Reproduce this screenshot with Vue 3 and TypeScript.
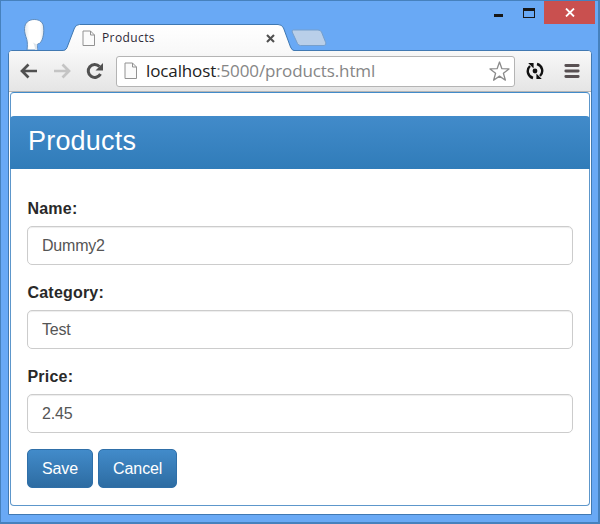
<script setup lang="ts">
import { ref } from 'vue'

interface Field {
  id: string
  label: string
  value: string
}

const title = 'Products'
const fields = ref<Field[]>([
  { id: 'name', label: 'Name:', value: 'Dummy2' },
  { id: 'category', label: 'Category:', value: 'Test' },
  { id: 'price', label: 'Price:', value: '2.45' },
])
</script>

<template>
  <div class="window">
    <header class="titlebar">
      <svg class="avatar" width="28" height="36" viewBox="0 0 28 36">
        <defs>
          <linearGradient id="skin" x1="0" x2="1">
            <stop offset="0" stop-color="#dfe5ea" />
            <stop offset=".25" stop-color="#fff" />
            <stop offset=".8" stop-color="#fff" />
            <stop offset="1" stop-color="#dde3e8" />
          </linearGradient>
        </defs>
        <path d="M7 36C7.600 32 7.500 28.500 6.800 25.500C5.500 21.500 4.300 18.500 4.500 14.500C4.700 9 8.500 5.500 14.200 5.500C20 5.500 23.500 8.500 23.700 14C23.900 18 23.700 20 22.800 23.500C22 27 20.500 29.500 17.500 30.200C17 32 17.200 34 17.800 36Z" fill="url(#skin)" stroke="#5f8cbd" stroke-width="1" />
        <path d="M12.500 28C14 29.500 15.500 30 17.200 30.300C16.800 32 17 34 17.300 36H15C15 32.500 14 30 12.500 28Z" fill="#dde4ea" />
      </svg>
      <div class="tab">
        <svg class="tab-shape" width="232" height="29" viewBox="0 0 232 29">
          <defs>
            <linearGradient id="tabfill" x1="0" x2="0" y1="0" y2="1">
              <stop offset="0" stop-color="#fff" />
              <stop offset="1" stop-color="#f8f8f8" />
            </linearGradient>
          </defs>
          <path d="M0 26.500C2.500 26.500 4 26 5 23.500L12.500 4Q14 .500 17.500 .500H216Q220 .500 221.500 4L228.500 23Q230 26.500 232 26.500V29H0Z" fill="url(#tabfill)" />
          <path d="M0 26.500C2.500 26.500 4 26 5 23.500L12.500 4Q14 .500 17.500 .500H216Q220 .500 221.500 4L228.500 23Q230 26.500 232 26.500" fill="none" stroke="#3f78b2" />
        </svg>
        <svg class="tab-page" width="14" height="17" viewBox="0 0 14 17">
          <path d="M1 1H8.500L12.500 5V15.500H1Z" fill="#fbfbfb" stroke="#929292" />
          <path d="M8.500 1V5H12.500" fill="none" stroke="#929292" />
        </svg>
        <span class="tab-title">{{ title }}</span>
        <svg class="tab-close" width="9" height="9" viewBox="0 0 9 9">
          <path d="M1 1L8 8M8 1L1 8" stroke="#505050" stroke-width="2.100" />
        </svg>
      </div>
      <svg class="newtab" width="36" height="18" viewBox="0 0 36 18">
        <path d="M2.500 1H27Q29.500 1 30.500 3L34.800 13.800Q35.300 16.500 33 16.500H9.500Q7.500 16.500 6.500 14.500L1.200 3Q.600 1 2.500 1Z" fill="#b9cfe9" stroke="#769fcc" />
      </svg>
      <div class="controls">
        <span class="minimize"></span>
        <span class="maximize"></span>
        <span class="close">
          <svg width="10" height="9" viewBox="0 0 10 9">
            <path d="M1 .5L9 8.500M9 .5L1 8.500" stroke="#fff" stroke-width="1.800" />
          </svg>
        </span>
      </div>
    </header>

    <div class="frame">
      <nav class="toolbar">
        <svg class="nav-icon" width="18" height="16" viewBox="0 0 18 16">
          <path d="M17 8H3M8.500 1.500L2 8L8.500 14.500" fill="none" stroke="#505050" stroke-width="2.700" />
        </svg>
        <svg class="nav-icon forward" width="18" height="16" viewBox="0 0 18 16">
          <path d="M1 8H15M9.500 1.500L16 8L9.500 14.500" fill="none" stroke="#c4c4c4" stroke-width="2.700" />
        </svg>
        <svg class="nav-icon reload" width="18" height="18" viewBox="0 0 18 18">
          <path d="M14.500 12A6.500 6.500 0 1 1 13.500 4.500" fill="none" stroke="#505050" stroke-width="3" />
          <path d="M17 1V8.500H9.500Z" fill="#505050" />
        </svg>
        <div class="address">
          <svg width="14" height="18" viewBox="0 0 14 18">
            <path d="M1 1H8.500L12.500 5V16.500H1Z" fill="#fbfbfb" stroke="#929292" />
            <path d="M8.500 1V5H12.500" fill="none" stroke="#929292" />
          </svg>
          <span class="url"><b>localhost</b>:5000/products.html</span>
          <svg class="star" width="21" height="21" viewBox="0 0 21 21">
            <path d="M10.500 1L12.900 7.700L20 7.900L14.400 12.200L16.400 19.200L10.500 15.100L4.600 19.200L6.600 12.200L1 7.900L8.100 7.700Z" fill="#fff" stroke="#8b8b8b" stroke-width="1.300" stroke-linejoin="round" />
          </svg>
        </div>
        <svg class="sync" width="18" height="18" viewBox="0 0 18 18">
          <path d="M7 16A7.100 7.100 0 0 1 4 4M11 2A7.100 7.100 0 0 1 14 14" fill="none" stroke="#111" stroke-width="2.400" />
          <path d="M2.200 1H7.600V6.400ZM15.800 17H10.400V11.600Z" fill="#111" />
          <circle cx="9" cy="9" r="2.400" fill="#111" />
        </svg>
        <svg class="menu" width="16" height="16" viewBox="0 0 16 16">
          <path d="M1.800 2.500H14.200M1.800 8H14.200M1.800 13.500H14.200" stroke="#585052" stroke-width="2.800" stroke-linecap="round" />
        </svg>
      </nav>

      <main class="page">
        <section class="panel">
          <h1 class="heading">{{ title }}</h1>
          <form class="form" @submit.prevent>
            <div v-for="field in fields" :key="field.id" class="group">
              <label :for="field.id">{{ field.label }}</label>
              <input :id="field.id" v-model="field.value" type="text" />
            </div>
            <div class="actions">
              <button type="submit">Save</button>
              <button type="button">Cancel</button>
            </div>
          </form>
        </section>
      </main>
    </div>
  </div>
</template>

<style>
body {
  margin: 0;
}
</style>

<style scoped>
* {
  box-sizing: border-box;
}

svg {
  display: block;
  flex: none;
}

.window {
  display: flex;
  flex-direction: column;
  width: 600px;
  height: 524px;
  padding: 0 6px 7px 7px;
  border: 1px solid #4681bd;
  border-right-width: 2px;
  border-bottom-width: 2px;
  background: #69a9f5;
  font-family: "Liberation Sans", Arial, sans-serif;
}

.titlebar {
  display: flex;
  align-items: flex-end;
  height: 49px;
  flex: none;
}

.avatar {
  margin-left: 12px;
}

.tab {
  position: relative;
  z-index: 1;
  display: flex;
  align-items: center;
  width: 232px;
  height: 28px;
  margin: 0 0 -2px 14px;
  padding: 0 19px 0 20px;
}

.tab-shape {
  position: absolute;
  left: 0;
  top: 0;
}

.tab-page,
.tab-title,
.tab-close {
  position: relative;
}

.tab-title {
  flex: 1;
  margin-left: 6px;
  color: #2d2836;
  font: 12px/16px "Open Sans", "Noto Sans", sans-serif;
  letter-spacing: 0.4px;
}

.newtab {
  margin: 0 0 3px -3px;
}

.controls {
  display: flex;
  align-self: flex-start;
  margin-left: auto;
  margin-right: -3px;
}

.minimize {
  width: 9px;
  height: 3px;
  margin-top: 13px;
  background: #171717;
}

.maximize {
  width: 12px;
  height: 10px;
  margin: 7px 9px 0 20px;
  border: 1px solid #171717;
  border-top-width: 3px;
}

.close {
  display: flex;
  align-items: center;
  justify-content: center;
  width: 51px;
  height: 23px;
  background: #c9504f;
}

.frame {
  display: flex;
  flex: 1;
  flex-direction: column;
  border: 1px solid #4179b2;
  border-radius: 4px 4px 0 0;
  background: #fff;
  overflow: hidden;
}

.toolbar {
  display: flex;
  align-items: center;
  height: 41px;
  flex: none;
  padding: 0 11px;
  border-bottom: 1px solid #b5b5b5;
  background: linear-gradient(#f8f8f8, #e5e5e5);
}

.forward {
  margin-left: 15px;
}

.reload {
  margin-left: 15px;
}

.address {
  display: flex;
  align-items: center;
  width: 399px;
  height: 31px;
  margin-left: 12px;
  padding: 0 4px 0 7px;
  border: 1px solid #b4b4b4;
  border-radius: 3px;
  background: #fff;
}

.url {
  flex: 1;
  margin-left: 8px;
  color: #868686;
  font: 17px/24px "Open Sans", "Noto Sans", sans-serif;
  letter-spacing: -0.12px;
  white-space: nowrap;
}

.url b {
  color: #222;
  font-weight: 400;
}

.sync {
  margin-left: 11px;
}

.menu {
  margin-left: auto;
}

.page {
  flex: 1;
  padding: 0 1px 8px;
}

.panel {
  height: 414px;
  padding-top: 23px;
  border: 1px solid #5d97cb;
  border-top-color: #428bca;
  border-radius: 4px;
}

.heading {
  height: 53px;
  margin: 0 -1px;
  padding: 10px 18px;
  border-radius: 4px 4px 0 0;
  background: linear-gradient(#428bca, #307cb9);
  color: #fff;
  font-size: 27px;
  font-weight: 400;
  line-height: 30px;
  letter-spacing: 0.2px;
}

.form {
  padding: 28px 16px 0;
}

.group {
  display: flex;
  flex-direction: column;
  margin-bottom: 16px;
}

label {
  height: 29px;
  padding-left: 0.5px;
  color: #292929;
  font-size: 16px;
  font-weight: 700;
  line-height: 24px;
  letter-spacing: 0.2px;
}

input {
  width: 100%;
  height: 39px;
  padding: 0 14px;
  border: 1px solid #ccc;
  border-radius: 5px;
  outline: 0;
  background: #fff;
  box-shadow: inset 0 1px 1px rgba(0, 0, 0, 0.075);
  color: #555;
  font: 16px "Liberation Sans", Arial, sans-serif;
  letter-spacing: -0.2px;
}

.actions {
  display: flex;
  gap: 5px;
}

button {
  height: 39px;
  padding: 0 14px;
  border: 1px solid #2f6fa8;
  border-radius: 5px;
  background: linear-gradient(#428bca, #2d6ca2);
  color: #fff;
  font: 16px "Liberation Sans", Arial, sans-serif;
  letter-spacing: -0.1px;
}
</style>
